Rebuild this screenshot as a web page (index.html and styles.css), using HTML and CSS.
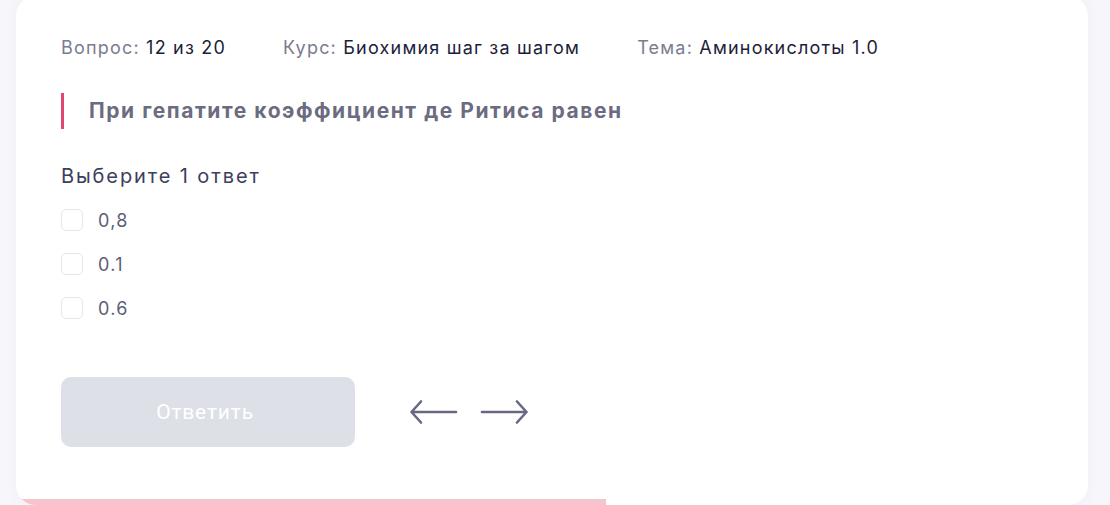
FILE: index.html
```html
<!DOCTYPE html>
<html lang="ru">
<head>
    <meta charset="UTF-8">
    <meta name="viewport" content="width=device-width, initial-scale=1.0">
    <title>Тест: Биохимия шаг за шагом</title>
    <link rel="stylesheet" href="styles.css">
</head>
<body>
    <!-- карточка вопроса -->
    <div class="page">
        <div class="quiz-card">
            <div class="quiz-meta">
                <span><span class="meta-label">Вопрос:</span> 12 из 20</span>
                <span><span class="meta-label">Курс:</span> Биохимия шаг за шагом</span>
                <span><span class="meta-label">Тема:</span> Аминокислоты 1.0</span>
            </div>

            <h2 class="quiz-question">При гепатите коэффициент де Ритиса равен</h2>

            <p class="quiz-hint">Выберите 1 ответ</p>
            <ul class="answers">
                <li><label><input type="checkbox" name="a"><span class="box"></span>0,8</label></li>
                <li><label><input type="checkbox" name="a"><span class="box"></span>0.1</label></li>
                <li><label><input type="checkbox" name="a"><span class="box"></span>0.6</label></li>
            </ul>

            <div class="quiz-actions">
                <button class="answer-btn" disabled>Ответить</button>
                <div class="nav-arrows">
                    <button class="arrow" title="Назад">
                        <svg width="50" height="26" viewBox="0 0 50 26" fill="none" stroke="#676883" stroke-width="2.6" stroke-linecap="round" stroke-linejoin="round"><path d="M47 13H2.5M12 2.5L2.5 13l9.5 10.5"/></svg>
                    </button>
                    <button class="arrow" title="Вперёд">
                        <svg width="50" height="26" viewBox="0 0 50 26" fill="none" stroke="#676883" stroke-width="2.6" stroke-linecap="round" stroke-linejoin="round"><path d="M3 13h44.5M38 2.5l9.5 10.5-9.5 10.5"/></svg>
                    </button>
                </div>
            </div>

            <!-- прогресс -->
            <div class="progress" style="width: 55%"></div>
        </div>
    </div>
</body>
</html>
```

FILE: styles.css
```css
/* общие стили */
body {
    margin: 0;
    background: #f6f6fb;
    font-family: Inter, 'Noto Sans', sans-serif;
    color: #1e1f3b;
    overflow: hidden;
}

.page {
    padding: 0 22px 0 16px;
    margin-top: -4px;
}

/* карточка */
.quiz-card {
    position: relative;
    background: #fff;
    border-radius: 20px;
    padding: 39px 45px 0;
    height: 470px;
    overflow: hidden;
    box-shadow: 0 0 14px rgba(120, 120, 180, 0.05);
}

.quiz-meta {
    display: flex;
    gap: 57px;
    font-size: 18px;
    line-height: 26px;
    letter-spacing: 1.2px;
    color: #1c1d3a;
}

.meta-label {
    color: #7b7c8e;
}

/* вопрос */
.quiz-question {
    margin: 32px 0 0;
    padding-left: 25px;
    border-left: 3px solid #df4670;
    font-size: 21px;
    font-weight: 700;
    line-height: 36px;
    letter-spacing: 1.55px;
    color: #6b6c7f;
}

.quiz-hint {
    margin: 33px 0 0;
    font-size: 20px;
    line-height: 28px;
    letter-spacing: 1.9px;
    color: #3d3e5b;
}

.answers {
    list-style: none;
    margin: 8px 0 0;
    padding: 0;
}

.answers li {
    height: 44px;
    display: flex;
    align-items: center;
}

.answers label {
    display: flex;
    align-items: center;
    gap: 15px;
    font-size: 18px;
    letter-spacing: 1.3px;
    color: #5d5e75;
    cursor: pointer;
}

.answers input {
    display: none;
}

.box {
    width: 20px;
    height: 20px;
    border: 1.5px solid #e6e6ec;
    border-radius: 5px;
}

.answers input:checked + .box {
    background: #df4670;
    border-color: #df4670;
}

/* кнопки */
.quiz-actions {
    margin-top: 47px;
    display: flex;
    align-items: center;
    gap: 54px;
}

.answer-btn {
    width: 294px;
    height: 70px;
    border: none;
    border-radius: 10px;
    background: #dde0e6;
    color: #fff;
    font-family: Roboto, sans-serif;
    font-size: 21px;
    letter-spacing: 0.8px;
    padding-right: 12px;
}

.nav-arrows {
    display: flex;
    gap: 20px;
}

.arrow {
    border: none;
    background: none;
    padding: 0;
    display: flex;
    cursor: pointer;
}

.progress {
    position: absolute;
    left: 0;
    bottom: 0;
    height: 6px;
    background: #f4c5cf;
}
```
